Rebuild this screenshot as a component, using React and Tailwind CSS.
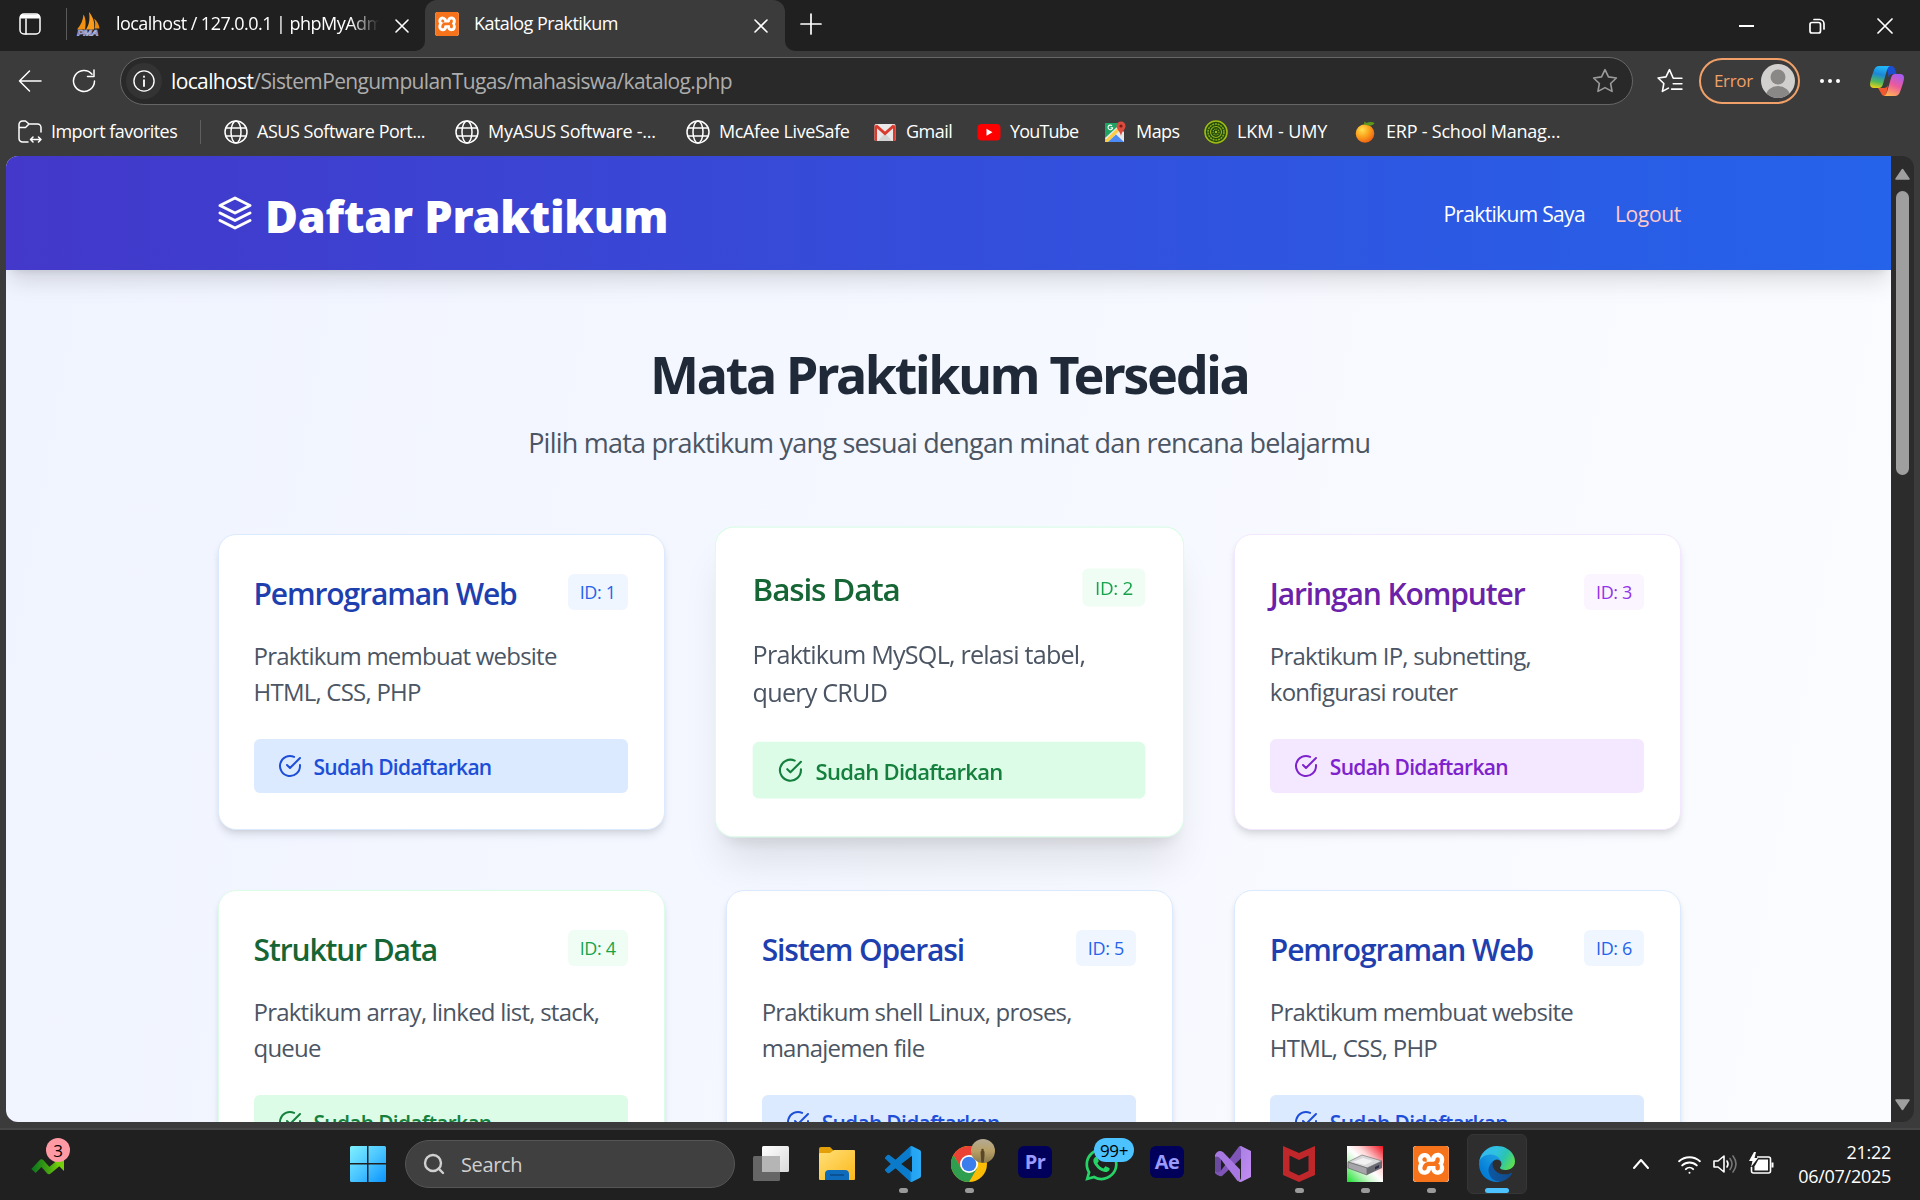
import React from "react";
import { SiXampp } from "react-icons/si";
import { FaWhatsapp } from "react-icons/fa";
import { Wifi, Search } from "lucide-react";

/* ---------- Browser icons ---------- */

const Line = ({ className = "size-6", w = 1.5, children, vb = "0 0 24 24" }) => (
  <svg
    viewBox={vb}
    fill="none"
    stroke="currentColor"
    strokeWidth={w}
    strokeLinecap="round"
    strokeLinejoin="round"
    className={`shrink-0 ${className}`}
  >
    {children}
  </svg>
);

const Close = () => (
  <Line className="size-4" vb="0 0 16 16" w={1.6}>
    <path d="M2 2l12 12M14 2L2 14" />
  </Line>
);

const Globe = () => (
  <Line w={1.5}>
    <circle cx="12" cy="12" r="11" />
    <ellipse cx="12" cy="12" rx="5" ry="11" />
    <path d="M2 8h20M2 16h20" />
  </Line>
);

const PmaIcon = () => (
  <svg viewBox="0 0 24 24" className="size-6 shrink-0">
    <path d="M1 17.500C5 13 7 8 7.500 2.500c2.500 4 2.500 10 1.500 15z" fill="#f29111" />
    <path d="M10 17.500c3.500-5 4-11 3-17.500 4.500 5.500 6 11 5 17.500z" fill="#fa9c1b" />
    <path d="M18.500 16.500c1-3 1-6-.5-10 3.500 3 5 6 5.500 10z" fill="#e78b10" />
    <text x="1" y="23.500" fontSize="9" fontWeight="800" fontStyle="italic" textLength="21" lengthAdjust="spacingAndGlyphs" fill="#5a66a8" stroke="#cfd3ee" strokeWidth="0.5" fontFamily="Liberation Sans, sans-serif">
      PMA
    </text>
  </svg>
);

const XamppIcon = ({ className }) => (
  <span className={`grid shrink-0 place-items-center rounded-[3px] bg-white ${className}`}>
    <SiXampp className="size-full text-[#f6731b]" />
  </span>
);

const GmailIcon = () => (
  <svg viewBox="0 0 24 24" className="size-6 shrink-0">
    <rect x="1.5" y="4" width="21" height="17" rx="1.5" fill="#e9e9e9" />
    <path d="M5 21l7-8 7 8z" fill="#d3d3d3" />
    <path d="M3 5.500l9 8 9-8" fill="none" stroke="#d93c2f" strokeWidth="3" />
    <path d="M1.500 5v14.500q0 1.500 1.500 1.500h1V6zM22.500 5v14.500q0 1.500-1.500 1.500h-1V6z" fill="#d93c2f" />
  </svg>
);

const YouTubeIcon = () => (
  <svg viewBox="0 0 24 24" className="size-6 shrink-0">
    <rect x="0.500" y="4" width="23" height="16.500" rx="4" fill="#f00" />
    <path d="M9.500 8.700v7l6-3.500z" fill="#fff" />
  </svg>
);

const MapsIcon = () => (
  <svg viewBox="0 0 24 24" className="size-6 shrink-0">
    <path d="M2 3h13l-1 6L4 21.500H2z" fill="#1da462" />
    <path d="M2 18L15 6l6 6v10H3z" fill="#e8e8e8" />
    <path d="M2 20.500L14 8.500l2 2.500L5 22H2z" fill="#ffcd40" />
    <path d="M5 22l8-7.500 8 7.500z" fill="#4c8bf5" />
    <path d="M9 5.800a2.300 2.300 0 1 0 .6 2H7.500" fill="none" stroke="#fff" strokeWidth="1.100" />
    <path d="M18 1.500a4.500 4.500 0 0 1 4.500 4.500c0 3.500-3.500 5-4.500 10-1-5-4.500-6.500-4.500-10A4.500 4.500 0 0 1 18 1.500z" fill="#dd4b3e" />
    <circle cx="18" cy="6" r="1.600" fill="#7a1f17" />
  </svg>
);

const LkmIcon = () => (
  <svg viewBox="0 0 24 24" className="size-6 shrink-0">
    <circle cx="12" cy="12" r="12" fill="#1f4a0c" />
    <circle cx="12" cy="12" r="11" fill="none" stroke="#a5b81a" strokeWidth="1.600" />
    <circle cx="12" cy="12" r="8" fill="none" stroke="#8dae17" strokeWidth="1.500" strokeDasharray="2 0.800" />
    <circle cx="12" cy="12" r="5.500" fill="none" stroke="#9cb51d" strokeWidth="1.100" />
    <circle cx="12" cy="12" r="3" fill="none" stroke="#8aa81b" strokeWidth="1.200" strokeDasharray="1.200 0.800" />
    <circle cx="12" cy="12" r="1.200" fill="#a5b81a" />
  </svg>
);

const MangoIcon = () => (
  <svg viewBox="0 0 24 24" className="size-6 shrink-0">
    <defs>
      <radialGradient id="mango" cx="0.350" cy="0.300" r="0.750">
        <stop offset="0" stopColor="#ffe04f" />
        <stop offset="0.500" stopColor="#fca31d" />
        <stop offset="1" stopColor="#ee5f12" />
      </radialGradient>
    </defs>
    <ellipse cx="12" cy="13.500" rx="9.300" ry="9.300" fill="url(#mango)" />
    <path d="M11 4.500l.5-3 2 1.500c3-1.500 6-1 8 0-1.500 2.500-5 3.500-8 2z" fill="#5d9a1c" />
  </svg>
);

const CopilotIcon = () => (
  <svg viewBox="0 0 34 30" className="h-[30px] w-[34px] shrink-0">
    <defs>
      <linearGradient id="cpA" x1="0.400" y1="0" x2="0.200" y2="1">
        <stop offset="0" stopColor="#22b5f5" />
        <stop offset="0.350" stopColor="#1b87d8" />
        <stop offset="0.700" stopColor="#52b95a" />
        <stop offset="1" stopColor="#f4d313" />
      </linearGradient>
      <linearGradient id="cpB" x1="0.700" y1="0" x2="0.300" y2="1">
        <stop offset="0" stopColor="#a75bf0" />
        <stop offset="0.500" stopColor="#ec5a9c" />
        <stop offset="1" stopColor="#ffb056" />
      </linearGradient>
    </defs>
    <path d="M17 0h4q3 0 4 3l1.500 5h-4q-3 0-4 3z" fill="#1c4fd0" />
    <path d="M8 22h6q3 0 4-3l-2 11h-1q-3 0-4-3z" fill="#f0592f" />
    <path d="M9 0h11q-2 .5-3 4l-4 14q-1 4-4 4H4q-4 0-4-4 0-3 4-14 1.500-4 5-4z" fill="url(#cpA)" />
    <path d="M25 30H14q2-.5 3-4l4-14q1-4 4-4h5q4 0 4 4 0 3-4 14-1.500 4-5 4z" fill="url(#cpB)" />
  </svg>
);

/* ---------- Browser chrome ---------- */

const TabStrip = () => (
  <div className="flex h-[51px] shrink-0 bg-[#3b3b3b] tracking-[-0.03em]">
    <div className="flex w-[425px] items-center rounded-br-[10px] bg-[#202020] pb-1 pl-[18px]">
      <Line className="size-6">
        <rect x="2" y="2" width="20" height="20" rx="4" />
        <path d="M3 5.500h18M3 4.500h18M3.500 3.500h17" strokeWidth="2" />
        <path d="M8 7v15" />
      </Line>
      <span className="ml-[24px] h-8 w-px bg-[#5a5a5a]" />
      <span className="ml-[9px]"><PmaIcon /></span>
      <span className="ml-[16px] w-[266px] overflow-hidden whitespace-nowrap [mask-image:linear-gradient(to_right,black_88%,transparent_99%)]">
        localhost / 127.0.0.1 | phpMyAdmin
      </span>
      <span className="ml-[12px] pt-1"><Close /></span>
    </div>
    <div className="w-[360px] bg-[#202020]">
      <div className="flex h-full items-center rounded-t-[12px] bg-[#3b3b3b] pb-1 pl-[10px]">
        <XamppIcon className="size-6" />
        <span className="ml-[15px]">Katalog Praktikum</span>
        <span className="mr-[16px] ml-auto pt-1"><Close /></span>
      </div>
    </div>
    <div className="flex flex-1 items-center rounded-bl-[10px] bg-[#202020] pl-[15px]">
      <Line className="mb-1 size-[22px]" vb="0 0 22 22" w={1.7}>
        <path d="M11 1v20M1 11h20" />
      </Line>
      <div className="ml-auto flex items-center">
        <span className="mr-[55px] h-[2px] w-[15px] bg-white" />
        <Line className="mr-[52px] size-4" vb="0 0 16 16" w={1.7}>
          <rect x="1" y="4.500" width="10.500" height="10.500" rx="2" />
          <path d="M5 1.500h5.500a4.500 4.500 0 0 1 4.500 4.500v5" />
        </Line>
        <Line className="mr-[27px] size-4" vb="0 0 16 16" w={1.7}>
          <path d="M1 1l14 14M15 1L1 15" />
        </Line>
      </div>
    </div>
  </div>
);

const Toolbar = () => (
  <div className="flex h-[60px] shrink-0 items-center pl-[18px]">
    <Line>
      <path d="M23 12H1.500M11.500 2L1.500 12l10 10" />
    </Line>
    <Line className="ml-[30px] size-6">
      <path d="M22.500 12A10.500 10.500 0 1 1 20 5.200M22 1v6.500h-6.500" />
    </Line>
    <div className="ml-[24px] flex h-12 w-[1513px] items-center rounded-full border-[1.5px] border-[#666] bg-[#292929] pl-[5px]">
      <span className="grid size-9 place-items-center rounded-full bg-[#333]">
        <Line className="size-[22px]">
          <circle cx="12" cy="12" r="11" />
          <path d="M12 11v6.500M12 7v.5" strokeWidth="2" />
        </Line>
      </span>
      <span className="ml-[9px] pt-[2px] text-[21px] tracking-[-0.03em] text-[#adadad]">
        <span className="text-white">localhost</span>/SistemPengumpulanTugas/mahasiswa/katalog.php
      </span>
      <Line className="mr-[14px] ml-auto size-[26px] text-[#9a9a9a]">
        <path d="M12 1.500l3.200 6.700 7.300 1-5.300 5.100 1.300 7.300L12 18.100l-6.500 3.500 1.300-7.300L1.500 9.200l7.300-1z" />
      </Line>
    </div>
    <Line className="ml-[24px] size-[26px]">
      <path d="M23 9.500H15l-3.500-8-3.200 6.700-7.300 1 5.300 5.100L5 21.600l5.500-3M15 14.500h8M13.500 19.500H23" />
    </Line>
    <div className="ml-[16px] flex h-[46px] w-[101px] items-center rounded-full border-2 border-[#f0a068] pl-[13px] text-[17px] tracking-[-0.02em] text-[#f0a068]">
      Error
      <svg viewBox="0 0 34 34" className="mr-[3px] ml-auto size-[34px]">
        <defs>
          <clipPath id="av"><circle cx="17" cy="17" r="17" /></clipPath>
        </defs>
        <g clipPath="url(#av)">
          <rect width="34" height="34" fill="#d2d0ce" />
          <circle cx="17" cy="13" r="7.500" fill="#8a8886" />
          <ellipse cx="17" cy="32" rx="12" ry="10" fill="#8a8886" />
        </g>
      </svg>
    </div>
    <div className="ml-[20px] flex gap-[4.5px]">
      <i className="size-[3.5px] rounded-full bg-white" />
      <i className="size-[3.5px] rounded-full bg-white" />
      <i className="size-[3.5px] rounded-full bg-white" />
    </div>
    <span className="ml-[30px]"><CopilotIcon /></span>
  </div>
);

const Bookmark = ({ icon, label, className = "" }) => (
  <div className={`flex shrink-0 items-center gap-[9px] whitespace-nowrap ${className}`}>
    {icon}
    <span className="-mt-px">{label}</span>
  </div>
);

const Bookmarks = () => (
  <div className="flex h-[45px] shrink-0 items-center pb-[3px] pl-[18px] tracking-[-0.021em]">
    <Bookmark
      className="w-[182px] tracking-[-0.03em]"
      label="Import favorites"
      icon={
        <Line>
          <path d="M10 22H4.500A3.500 3.500 0 0 1 1 18.500V4.500A3.500 3.500 0 0 1 4.500 1h3L11 4h8.500A3.500 3.500 0 0 1 23 7.500V12M1 7.500h6.500L11 4M12.500 19.500H23M15 17l-2.500 2.500L15 22M20.500 17l2.500 2.500-2.500 2.500" />
        </Line>
      }
    />
    <span className="mr-[23px] h-6 w-px bg-[#5f5f5f]" />
    <Bookmark className="w-[231px] tracking-[-0.026em]" icon={<Globe />} label="ASUS Software Port..." />
    <Bookmark className="w-[231px] tracking-[-0.016em]" icon={<Globe />} label="MyASUS Software -..." />
    <Bookmark className="w-[187px]" icon={<Globe />} label="McAfee LiveSafe" />
    <Bookmark className="w-[104px] tracking-[-0.03em]" icon={<GmailIcon />} label="Gmail" />
    <Bookmark className="w-[126px] tracking-[-0.045em]" icon={<YouTubeIcon />} label="YouTube" />
    <Bookmark className="w-[101px] tracking-[-0.03em]" icon={<MapsIcon />} label="Maps" />
    <Bookmark className="w-[149px] tracking-[-0.005em]" icon={<LkmIcon />} label="LKM - UMY" />
    <Bookmark className="tracking-[-0.012em]" icon={<MangoIcon />} label="ERP - School Manag..." />
  </div>
);

/* ---------- Page ---------- */

const THEMES = {
  blue: { border: "border-blue-100", title: "text-[#1e40af]", badge: "bg-[#eff6ff] text-[#2563eb]", bar: "bg-[#dbeafe] text-[#1d4ed8]" },
  green: { border: "border-green-100", title: "text-[#166534]", badge: "bg-[#f0fdf4] text-[#16a34a]", bar: "bg-[#dcfce7] text-[#15803d]" },
  purple: { border: "border-purple-100", title: "text-[#6b21a8]", badge: "bg-[#faf5ff] text-[#9333ea]", bar: "bg-[#f3e8ff] text-[#7e22ce]" },
};

const COURSES = [
  { id: 1, name: "Pemrograman Web", text: ["Praktikum membuat website", "HTML, CSS, PHP"], theme: "blue" },
  { id: 2, name: "Basis Data", text: ["Praktikum MySQL, relasi tabel,", "query CRUD"], theme: "green", raised: true },
  { id: 3, name: "Jaringan Komputer", text: ["Praktikum IP, subnetting,", "konfigurasi router"], theme: "purple" },
  { id: 4, name: "Struktur Data", text: ["Praktikum array, linked list, stack,", "queue"], theme: "green" },
  { id: 5, name: "Sistem Operasi", text: ["Praktikum shell Linux, proses,", "manajemen file"], theme: "blue" },
  { id: 6, name: "Pemrograman Web", text: ["Praktikum membuat website", "HTML, CSS, PHP"], theme: "blue" },
];

const CourseCard = ({ course }) => {
  const t = THEMES[course.theme];
  const lift = course.raised
    ? "z-10 scale-105 shadow-[0_30px_38px_-8px_rgba(0,0,0,0.1),0_12px_15px_-9px_rgba(0,0,0,0.1)]"
    : "shadow-[0_6px_9px_-1.5px_rgba(0,0,0,0.1),0_3px_6px_-3px_rgba(0,0,0,0.1)]";
  return (
    <article className={`h-[296px] rounded-[18px] border bg-white py-9 pr-9 pl-[35px] ${t.border} ${lift}`}>
      <div className="flex items-center justify-between">
        <h3 className={`pt-[2px] text-[30px] leading-[41px] font-semibold tracking-[-0.037em] ${t.title}`}>{course.name}</h3>
        <span className={`mb-[2px] grid h-9 w-[60px] place-items-center rounded-md text-[18px] tracking-[-0.02em] ${t.badge}`}>
          <span className="pt-px">ID: {course.id}</span>
        </span>
      </div>
      <p className="mt-6 text-[24px] leading-9 tracking-[-0.032em] whitespace-nowrap text-[#4b5563]">
        {course.text[0]}
        <br />
        {course.text[1]}
      </p>
      <div className={`mt-[29px] flex h-[54px] items-center gap-3 rounded-md pl-6 text-[21px] font-semibold tracking-[-0.034em] ${t.bar}`}>
        <Line w={2}>
          <path d="M22 11.080V12a10 10 0 1 1-5.930-9.140" />
          <path d="M22 4L12 14.010l-3-3" />
        </Line>
        <span className="pt-[3px]">Sudah Didaftarkan</span>
      </div>
    </article>
  );
};

const Page = () => (
  <div className="flex h-full flex-1 flex-col overflow-hidden bg-linear-[100deg,#f0f4ff,#f5f8ff_50%,#fbfcff]">
    <header className="z-20 flex h-[114px] shrink-0 items-center bg-linear-to-r/srgb from-[#4338ca] to-[#2563eb] pr-[210px] pl-[211px] text-[21px] text-white shadow-[0_15px_22px_-4px_rgba(0,0,0,0.13),0_6px_9px_-6px_rgba(0,0,0,0.13)]">
      <Line className="size-9" w={2}>
        <path d="M12 2L2 7l10 5 10-5z" />
        <path d="M2 17l10 5 10-5M2 12l10 5 10-5" />
      </Line>
      <h1 className="ml-[12px] pt-[5px] font-['Noto_Sans'] text-[45px] font-black tracking-[-0.006em]">Daftar Praktikum</h1>
      <nav className="ml-auto flex gap-[30px] pt-[4px] tracking-[-0.032em]">
        <span>Praktikum Saya</span>
        <span className="tracking-[-0.015em] text-[#fecaca]">Logout</span>
      </nav>
    </header>
    <main className="pt-[66px] pr-[210px] pl-[211.5px]">
      <div className="text-center">
        <h2 className="pt-px font-['Noto_Sans'] text-[52px] leading-[74px] font-bold tracking-[-0.044em] text-[#1f2937]">Mata Praktikum Tersedia</h2>
        <p className="mt-[11px] text-[27px] leading-[41px] tracking-[-0.029em] text-[#4b5563]">
          Pilih mata praktikum yang sesuai dengan minat dan rencana belajarmu
        </p>
      </div>
      <div className="mt-[71px] grid grid-cols-3 gap-x-[61px] gap-y-[60px]">
        {COURSES.map((c) => (
          <CourseCard key={c.id} course={c} />
        ))}
      </div>
    </main>
  </div>
);

const Scrollbar = () => (
  <div className="flex w-[23px] shrink-0 flex-col items-center bg-[#2c2c2c] pt-[12px] pb-[11px]">
    <svg viewBox="0 0 15 12" className="h-3 w-[15px]">
      <path d="M7.500 1.500L14 11H1z" fill="#9f9f9f" stroke="#9f9f9f" strokeWidth="1.500" strokeLinejoin="round" />
    </svg>
    <span className="mt-[11px] h-[284px] w-[13px] rounded-full bg-[#9f9f9f]" />
    <svg viewBox="0 0 15 12" className="mt-auto h-3 w-[15px]">
      <path d="M7.500 10.500L14 1H1z" fill="#9f9f9f" stroke="#9f9f9f" strokeWidth="1.500" strokeLinejoin="round" />
    </svg>
  </div>
);

/* ---------- Taskbar ---------- */

const G = ({ id, stops, ...p }) => (
  <linearGradient id={id} {...p}>
    {stops.map(([o, c]) => (
      <stop key={o} offset={o} stopColor={c} />
    ))}
  </linearGradient>
);

const TaskView = () => (
  <svg viewBox="0 0 36 36" className="size-9">
    <defs><G id="tv" x2="1" y2="1" stops={[[0, "#fff"], [1, "#d9d9d9"]]} /></defs>
    <rect x="0" y="10" width="27" height="25" rx="1.500" fill="#666" />
    <rect x="9" y="0" width="27" height="26" rx="1.500" fill="url(#tv)" />
    <path d="M9 10h18v16H10.500A1.500 1.500 0 0 1 9 24.500z" fill="#b5b5b5" />
  </svg>
);

const Explorer = () => (
  <svg viewBox="0 0 36 36" className="size-9">
    <defs><G id="ex" x2="1" y2="1" stops={[[0, "#ffe07a"], [1, "#fcb81a"]]} /></defs>
    <path d="M0 3q0-2 2-2h9l4 4v8H0z" fill="#e3a008" />
    <path d="M0 8q0-1 1-1h10l4-3h20q1 0 1 1v28q0 1-1 1H1q-1 0-1-1z" fill="url(#ex)" />
    <path d="M6 34v-6q0-4 4-4h16q4 0 4 4v6z" fill="#0f6cbd" />
    <path d="M11 29h14" stroke="#0a4a86" strokeWidth="1.500" />
  </svg>
);

const VsCode = () => (
  <svg viewBox="0 0 24 24" className="size-9">
    <defs><G id="vsc" x2="1" stops={[[0, "#0a79c9"], [0.68, "#0a7ccb"], [0.75, "#23a3f1"], [1, "#2cabf5"]]} /></defs>
    <path
      fill="url(#vsc)"
      fillRule="evenodd"
      d="M23.150 2.587L18.210.21a1.494 1.494 0 0 0-1.705.29l-9.460 8.630-4.120-3.128a.999.999 0 0 0-1.276.057L.327 7.261A1 1 0 0 0 .326 8.740L3.899 12 .326 15.260a1 1 0 0 0 .001 1.479L1.650 17.940a.999.999 0 0 0 1.276.057l4.120-3.128 9.460 8.630a1.492 1.492 0 0 0 1.704.290l4.942-2.377A1.500 1.500 0 0 0 24 20.060V3.939a1.500 1.500 0 0 0-.850-1.352zm-5.146 14.861L10.826 12l7.178-5.448v10.896z"
    />
  </svg>
);

const Chrome = () => (
  <span className="relative size-9">
    <svg viewBox="0 0 36 36" className="size-9">
      <circle cx="18" cy="18" r="18" fill="#fbbc05" />
      <path d="M18 9h15.600A18 18 0 0 0 2.400 9l8 13.500z" fill="#ea4335" />
      <path d="M2.400 9A18 18 0 0 0 18 36l8-13.500L18 26a9 9 0 0 1-7.800-4z" fill="#2f9e4f" />
      <circle cx="18" cy="18" r="9" fill="#fff" />
      <circle cx="18" cy="18" r="7.300" fill="#3b7ded" />
    </svg>
    <svg viewBox="0 0 24 24" className="absolute -top-[7px] left-5 size-6">
      <defs>
        <clipPath id="ph"><circle cx="12" cy="12" r="12" /></clipPath>
        <G id="pg" x2="0" y2="1" stops={[[0, "#b5ab95"], [0.5, "#b8a066"], [1, "#8a7a4e"]]} />
      </defs>
      <g clipPath="url(#ph)">
        <rect width="24" height="24" fill="url(#pg)" />
        <path d="M9.500 12.500q2.500-1.500 4 0v4l-.7 7h-2.500l-.5-7z" fill="#5a4728" />
        <circle cx="11.500" cy="11" r="1.300" fill="#5a4728" />
      </g>
    </svg>
  </span>
);

const Adobe = ({ label }) => (
  <span className="mb-[4px] grid h-8 w-[34px] place-items-center rounded-[6px] bg-[#00005b] text-[20px] leading-none font-bold tracking-[-0.03em] text-[#9a9aff]">
    <span>{label}</span>
  </span>
);

const WhatsApp = () => (
  <span className="relative size-9">
    <FaWhatsapp className="size-[37px] text-[#25d366]" />
    <span className="absolute -top-[8px] left-[11px] grid h-6 w-[40px] place-items-center rounded-full bg-[#4cc2ff] text-[17px] leading-none tracking-[-0.02em] text-black">
      99+
    </span>
  </span>
);

const VisualStudio = () => (
  <svg viewBox="0 0 36 36" className="size-9">
    <defs><G id="vs" x2="1" y2="1" stops={[[0, "#a47ee0"], [1, "#c58df5"]]} /></defs>
    <path d="M0 9l6-3v24l-6-3z" fill="#6a4a9c" />
    <path d="M6 24.500l18-24 2 1v11L7 30q-4 1-7-3v-2q3 3 6-.5z" fill="#7f56b8" />
    <path d="M0 9q3-6 8-3l17 17.500V34l-2.500 1L6 13.500Q3 9 0 11z" fill="#a878e2" />
    <path d="M24 .5L26 0l10 5v26l-10 5q-2 0-3.500-1.500Q26 35 26 31V5q0-4-2-4.500z" fill="url(#vs)" />
  </svg>
);

const McAfee = () => (
  <svg viewBox="0 0 32 36" className="h-9 w-8">
    <path d="M0 0l16 7L32 0v29l-16 7-16-7zM6.500 9.500V25l9.500 4.500 9.500-4.500V9.500L16 14z" fill="#c0272b" fillRule="evenodd" />
  </svg>
);

const Device = () => (
  <svg viewBox="0 0 36 36" className="size-9">
    <defs><G id="dv" x1="1" y1="0" x2="0" y2="1" stops={[[0, "#f00f1e"], [0.35, "#ffd9d9"], [0.5, "#fff"], [0.65, "#d2f7d2"], [1, "#18e02e"]]} /></defs>
    <rect width="36" height="36" fill="url(#dv)" />
    <path d="M1 16l14-7 20 6-15 7z" fill="#d9d9dc" stroke="#777" strokeWidth="0.700" />
    <path d="M1 16l19 6v7L1 22z" fill="#a5a5aa" stroke="#666" strokeWidth="0.700" />
    <path d="M20 22l15-7v7l-15 7z" fill="#6a6a72" />
    <path d="M6 16l10-4 10 3-8 4z" fill="#f2f2f2" />
    <path d="M28 21l4-2v2.500l-4 2z" fill="#2b2b44" />
  </svg>
);

const Edge = () => (
  <svg viewBox="0 0 256 256" className="size-9">
    <defs>
      <G id="e1" x2="1" y2="0" stops={[[0, "#0c59a4"], [1, "#114a8b"]]} />
      <G id="e2" x1="0.900" y1="0.200" x2="0.200" y2="1" stops={[[0, "#1b9de2"], [0.3, "#1595df"], [0.7, "#0680d7"], [1, "#0078d4"]]} />
      <G id="e3" x1="0" y1="0.300" x2="1" y2="0.700" stops={[[0, "#35b8f1"], [0.4, "#2fc2df"], [0.65, "#2bc3b2"], [1, "#5fe04c"]]} />
    </defs>
    <path fill="url(#e1)" d="M231 190.500c-3.400 1.800-6.900 3.400-10.500 4.700a101.500 101.500 0 0 1-35.900 6.500c-47.300 0-88.500-32.500-88.500-74.300a31.500 31.500 0 0 1 16.400-27.300c-42.800 1.800-53.800 46.400-53.800 72.500 0 74 68.100 81.400 82.800 81.400 7.900 0 19.800-2.300 27-4.600l1.300-.4a128.300 128.300 0 0 0 66.600-52.800 4 4 0 0 0-5.400-5.700z" />
    <path fill="url(#e2)" d="M105.700 241.400a79.200 79.200 0 0 1-22.700-21.300 80.700 80.700 0 0 1 29.500-120c3.200-1.500 8.500-4.100 15.600-4a32.400 32.400 0 0 1 25.700 13 31.900 31.900 0 0 1 6.300 18.700c0-.2 24.500-79.600-80-79.600-43.900 0-80 41.600-80 78.200a130.200 130.200 0 0 0 12.100 56 128 128 0 0 0 156.400 67 75.500 75.500 0 0 1-62.800-8z" />
    <path fill="url(#e3)" d="M152.300 148.900c-.9 1-3.400 2.500-3.400 5.600 0 2.600 1.700 5.200 4.800 7.300 14.300 10 41.400 8.600 41.500 8.600 10.700 0 21.100-2.900 30.300-8.300a61.400 61.400 0 0 0 30.400-52.900c.3-22.400-8-37.300-11.300-43.900C223.500 23.900 177.700 0 128 0A128 128 0 0 0 0 126.200c.5-36.500 36.800-66 80-66 3.500 0 23.500.3 42 10a72.600 72.600 0 0 1 30.900 29.300c6.100 10.600 7.200 24.100 7.200 29.500s-2.700 13.300-7.800 19.900z" />
  </svg>
);

const Dock = ({ children, running, active }) => (
  <div className="flex w-[66px] justify-center">
    <div className={`flex h-[60px] w-[60px] flex-col items-center rounded-md ${active ? "border border-[#363636] bg-[#2e2e2e] pt-[11px]" : "pt-[12px]"}`}>
      <div className="grid h-9 place-items-center">{children}</div>
      {running && <span className="mt-[6px] h-[5px] w-[9px] rounded-full bg-[#9a9a9a]" />}
      {active && <span className="mt-[6px] h-[5px] w-6 rounded-full bg-[#4cc2ff]" />}
    </div>
  </div>
);

const Taskbar = () => (
  <div className="flex h-[72px] shrink-0 items-center border-t-2 border-[#454545] bg-[#202020] pb-[2px]">
    <div className="relative mt-[4px] ml-[31px] h-[18px] w-[35px]">
      <svg viewBox="0 0 35 18" className="h-[18px] w-[35px]">
        <defs><G id="st" x2="1" stops={[[0, "#0f7a1c"], [0.5, "#3f9e12"], [1, "#7bd60a"]]} /></defs>
        <path d="M2.500 14l8-8.500 7.500 8.500L30 4" fill="none" stroke="url(#st)" strokeWidth="6" strokeLinejoin="round" />
        <path d="M19 0h14v14z" fill="#76cf0b" />
      </svg>
      <span className="absolute -top-[19px] left-[15px] grid size-6 place-items-center rounded-full bg-[#ff99a4] text-[17px] leading-none text-black">3</span>
    </div>
    <svg viewBox="0 0 36 36" className="ml-[284px] size-9">
      <defs><G id="win" gradientUnits="userSpaceOnUse" x1="0" y1="0" x2="36" y2="36" stops={[[0, "#80f1ff"], [0.5, "#4bc6ff"], [1, "#0b93ff"]]} /></defs>
      <path fill="url(#win)" d="M1.500 0H17v17H0V1.500Q0 0 1.500 0zM18.500 0H34.500Q36 0 36 1.500V17H18.500zM0 18.500h17V36H1.500Q0 36 0 34.500zM18.500 18.500H36v16q0 1.500-1.500 1.500h-16z" />
    </svg>
    <div className="ml-[19px] flex h-12 w-[330px] items-center rounded-full border border-[#555] bg-[#404040] pl-[16px] text-[20px] tracking-[-0.018em] text-[#d0d0d0]">
      <Search className="size-6" strokeWidth={2.4} />
      <span className="ml-[15px] pt-px">Search</span>
    </div>
    <div className="ml-[3px] flex">
      <Dock><TaskView /></Dock>
      <Dock><Explorer /></Dock>
      <Dock running><VsCode /></Dock>
      <Dock running><Chrome /></Dock>
      <Dock><Adobe label="Pr" /></Dock>
      <Dock><WhatsApp /></Dock>
      <Dock><Adobe label="Ae" /></Dock>
      <Dock><VisualStudio /></Dock>
      <Dock running><McAfee /></Dock>
      <Dock running><Device /></Dock>
      <Dock running><XamppIcon className="size-9" /></Dock>
      <Dock active><Edge /></Dock>
    </div>
    <Line className="ml-[102px] size-[18px]" vb="0 0 18 18" w={2}>
      <path d="M2 13l7-8 7 8" />
    </Line>
    <Wifi className="ml-[27px] size-[25px]" strokeWidth={1.9} />
    <Line className="ml-[11px] size-6" w={1.6}>
      <path d="M1 9h4l6-5v16l-6-5H1z" />
      <path d="M14 9q2 3 0 6" />
      <path d="M17 6.500q4 5.500 0 11M20 4q6 8 0 16" stroke="#777" />
    </Line>
    <svg viewBox="0 0 25 24" className="ml-[12px] h-6 w-[25px]">
      <path d="M8 5h11.500Q21.500 5 21.500 7v12q0 2-2 2h-15q-2 0-2-2v-4" fill="none" stroke="#fff" strokeWidth="1.600" />
      <path d="M9.500 7.500h9.500v11H5.500v-4z" fill="#fff" />
      <path d="M22.500 10.500h2v5h-2zM5 0L0 9h3.500L2 15l7-9H5.500L7 0z" fill="#fff" />
    </svg>
    <div className="mr-[29px] ml-auto pb-px text-right text-[18px] leading-6 tracking-[-0.015em]">
      <div>21:22</div>
      <div>06/07/2025</div>
    </div>
  </div>
);

export default function App() {
  return (
    <div className="flex h-[1200px] w-[1920px] flex-col overflow-hidden bg-[#3b3b3b] font-['Open_Sans','Noto_Sans',sans-serif] text-[18px] text-white">
      <TabStrip />
      <Toolbar />
      <Bookmarks />
      <div className="mx-[6px] mb-[6px] flex h-[966px] shrink-0 overflow-hidden rounded-[12px]">
        <Page />
        <Scrollbar />
      </div>
      <Taskbar />
    </div>
  );
}
